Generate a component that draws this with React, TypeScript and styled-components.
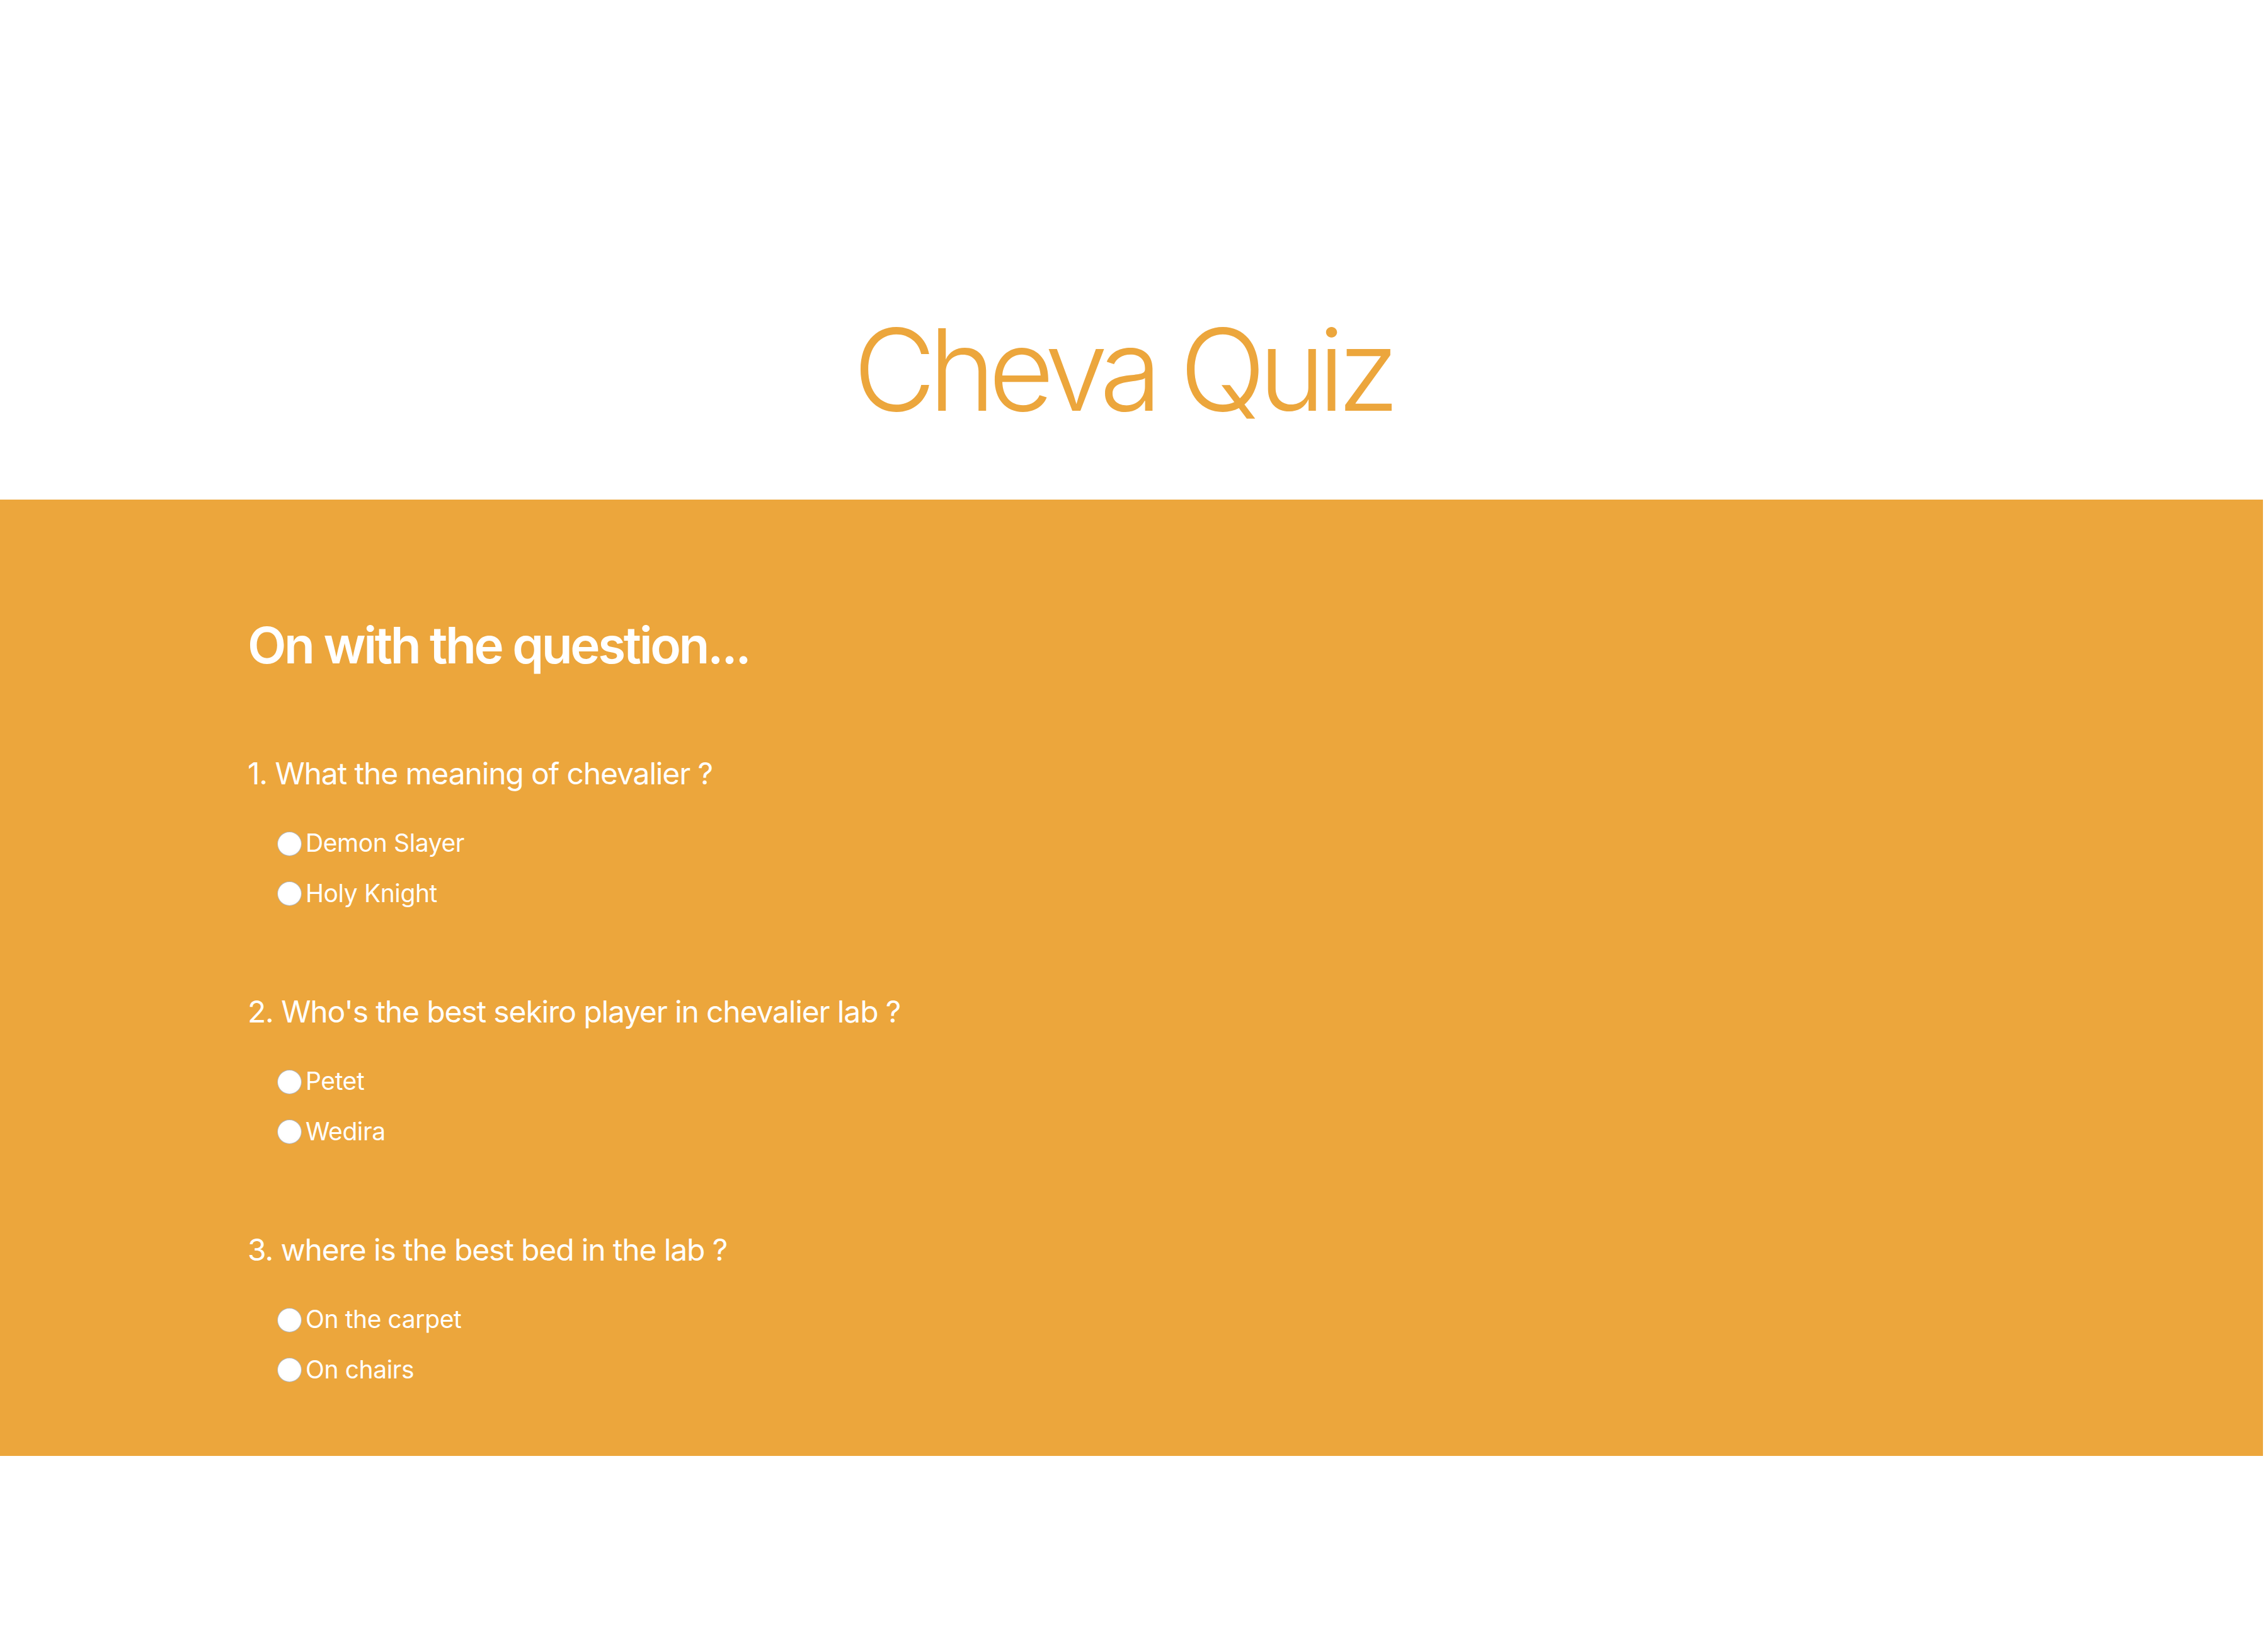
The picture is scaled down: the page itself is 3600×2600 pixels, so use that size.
import React from "react";
import styled, { createGlobalStyle } from "styled-components";

const Global = createGlobalStyle`
  html, body { margin: 0; padding: 0; background: #ffffff; }
  body { font-family: Inter, "Noto Sans", sans-serif; }
`;

const ORANGE = "#eca63c";

const Header = styled.header`
  width: 3592px;
  height: 793px;
  display: flex;
  justify-content: center;
  align-items: flex-start;
  padding: 497px 28px 0 0;
  box-sizing: border-box;
`;

const Title = styled.h1`
  margin: 0;
  font-family: Inter, sans-serif;
  font-weight: 300;
  font-size: 180px;
  line-height: 1;
  letter-spacing: -11.3px;
  color: ${ORANGE};
`;

const Band = styled.main`
  width: 3592px;
  background: ${ORANGE};
  padding: 191px 0 116px 393px;
  box-sizing: border-box;
  color: #ffffff;
`;

const Heading = styled.h2`
  margin: 0 0 139.5px;
  font-size: 80px;
  font-weight: 600;
  line-height: 1;
  letter-spacing: -3.4px;
`;

const QuestionBlock = styled.section<{ $last?: boolean }>`
  margin-bottom: ${(p) => (p.$last ? 0 : 143)}px;
`;

const QuestionText = styled.p`
  margin: 0 0 66.5px;
  font-size: 48px;
  font-weight: 400;
  line-height: 1;
  letter-spacing: -1.15px;
`;

const Options = styled.div`
  display: flex;
  flex-direction: column;
  gap: 38.5px;
  padding-left: 47px;
`;

const OptionRow = styled.label`
  display: flex;
  align-items: flex-start;
  height: 41px;
  gap: 6px;
  font-size: 39px;
  line-height: 1;
  letter-spacing: -0.4px;
  cursor: pointer;
`;

const Radio = styled.input.attrs({ type: "radio" })`
  appearance: none;
  -webkit-appearance: none;
  margin: 1.5px 0 0 0;
  width: 39px;
  height: 39px;
  border-radius: 50%;
  background: radial-gradient(circle at 50% 40%, #ffffff 60%, #f1f1f1 100%);
  border: 1.5px solid rgba(120, 120, 120, 0.55);
  box-sizing: border-box;
  flex-shrink: 0;
`;

const questions = [
  { q: "1. What the meaning of chevalier ?", name: "q1", opts: ["Demon Slayer", "Holy Knight"] },
  { q: "2. Who's the best sekiro player in chevalier lab ?", name: "q2", opts: ["Petet", "Wedira"] },
  { q: "3. where is the best bed in the lab ?", name: "q3", opts: ["On the carpet", "On chairs"] },
];

export default function App() {
  return (
    <>
      <Global />
      <Header>
        <Title>Cheva Quiz</Title>
      </Header>
      <Band>
        <Heading>On with the question...</Heading>
        {questions.map((item, i) => (
          <QuestionBlock key={item.name} $last={i === questions.length - 1}>
            <QuestionText>{item.q}</QuestionText>
            <Options>
              {item.opts.map((o) => (
                <OptionRow key={o}>
                  <Radio name={item.name} value={o} />
                  <span>{o}</span>
                </OptionRow>
              ))}
            </Options>
          </QuestionBlock>
        ))}
      </Band>
    </>
  );
}
